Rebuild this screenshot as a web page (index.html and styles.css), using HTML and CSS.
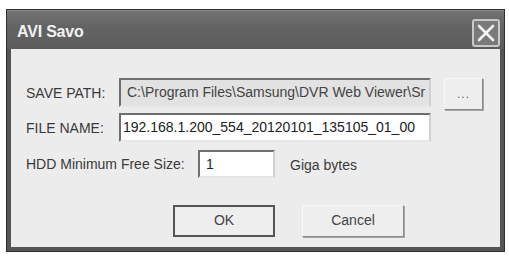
FILE: index.html
```html
<!DOCTYPE html>
<html>
<head>
<meta charset="utf-8">
<link rel="stylesheet" href="styles.css">
</head>
<body>
<div class="dialog">
  <div class="titlebar">
    <span class="title">AVI Savo</span>
    <span class="close">
      <svg width="20" height="20" viewBox="0 0 20 20"><path d="M3 3 L17 17 M17 3 L3 17" stroke="#f4f4f4" stroke-width="2.6" stroke-linecap="round"/></svg>
    </span>
  </div>
  <div class="body">
    <div class="row row1">
      <span class="label">SAVE PATH:</span>
      <div class="field disabled wide">C:\Program Files\Samsung\DVR Web Viewer\Sr</div>
      <div class="btn browse">...</div>
    </div>
    <div class="row row2">
      <span class="label">FILE NAME:</span>
      <div class="field wide fname">192.168.1.200_554_20120101_135105_01_00</div>
    </div>
    <div class="row row3">
      <span class="label hdd">HDD Minimum Free Size:</span>
      <div class="field small">1</div>
      <span class="unit">Giga bytes</span>
    </div>
    <div class="actions">
      <div class="btn action default">OK</div>
      <div class="btn action">Cancel</div>
    </div>
  </div>
</div>
</body>
</html>
```
FILE: styles.css
```css
html, body {
  margin: 0;
  padding: 0;
  background: #ffffff;
}
body {
  font-family: "Liberation Sans", Arial, sans-serif;
  font-size: 14px;
  color: #333;
}
.dialog {
  margin: 9px 0 0 6px;
  width: 499px;
  height: 243px;
  box-sizing: border-box;
  border: 1px solid #2e2e2e;
  background: #555555;
  display: flex;
  flex-direction: column;
}
.titlebar {
  height: 38px;
  flex: none;
  display: flex;
  align-items: center;
  justify-content: space-between;
  padding: 0 4px 0 10px;
  background: linear-gradient(#727272, #646464 40%, #5c5c5c);
  border-top: 1px solid #8a8a8a;
}
.title {
  color: #f2f2f2;
  font-weight: bold;
  font-size: 16px;
  letter-spacing: -0.2px;
  margin-top: 4px;
}
.close {
  width: 24px;
  height: 24px;
  border: 2px solid #c8c8c8;
  border-radius: 3px;
  background: #7a7a7a;
  display: flex;
  align-items: center;
  justify-content: center;
  margin-top: 6px;
}
.body {
  flex: 1;
  margin: 0 4px 4px 4px;
  background: #ececec;
  padding: 29px 0 0 15px;
  display: flex;
  flex-direction: column;
}
.row {
  display: flex;
  align-items: center;
  height: 29px;
}
.row1 { align-items: flex-start; }
.row1 .label { line-height: 31px; }
.row2 { margin-top: 6px; }
.row3 { margin-top: 8px; height: 28px; }
.label {
  width: 93px;
  flex: none;
  color: #3a3a3a;
}
.label.hdd { width: 172px; }
.field {
  box-sizing: border-box;
  height: 29px;
  border: 2px solid;
  border-color: #6e6e6e #d0d0d0 #e6e6e6 #6e6e6e;
  background: #ffffff;
  color: #222;
  white-space: nowrap;
  overflow: hidden;
  line-height: 25px;
  padding-left: 6px;
}
.field.wide { width: 312px; }
.field.fname { padding-left: 2px; }
.field.disabled {
  background: #e2e2e2;
  color: #444;
}
.field.small {
  width: 77px;
  height: 28px;
  line-height: 24px;
}
.unit {
  margin-left: 15px;
  margin-top: 2px;
  color: #3a3a3a;
}
.btn {
  box-sizing: border-box;
  display: flex;
  align-items: center;
  justify-content: center;
  background: #eeeeee;
  border: 1px solid;
  border-color: #f8f8f8 #8a8a8a #8a8a8a #f8f8f8;
  box-shadow: 1px 1px 0 #a5a5a5;
  color: #444;
}
.browse {
  width: 39px;
  height: 32px;
  margin-left: 13px;
  font-size: 12px;
  color: #666;
  letter-spacing: 1px;
}
.actions {
  display: flex;
  gap: 27px;
  margin-top: 27px;
  padding-left: 147px;
}
.action {
  width: 102px;
  height: 32px;
  padding-bottom: 2px;
}
.action.default {
  border: 2px solid #555;
  box-shadow: none;
}
```
